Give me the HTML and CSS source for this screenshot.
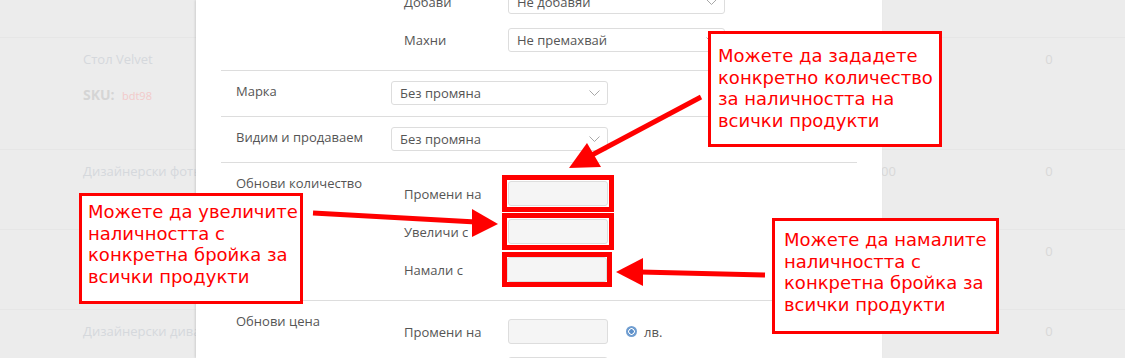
FILE: index.html
```html
<!DOCTYPE html>
<html lang="bg">
<head>
    <meta charset="UTF-8">
    <meta name="viewport" content="width=device-width, initial-scale=1.0">
    <title>Масова редакция на продукти</title>
    <link rel="stylesheet" href="styles.css">
</head>
<body>
    <div class="page">
        <!-- списък с продукти зад прозореца -->
        <div class="product-list">
            <div class="product-row row-top"></div>
            <div class="product-row row-tall">
                <div class="cell-name">
                    Стол Velvet
                    <div class="sku"><b>SKU:</b> <span>bdt98</span></div>
                </div>
                <div class="cell-price"></div>
                <div class="cell-qty">0</div>
            </div>
            <div class="product-row">
                <div class="cell-name">Дизайнерски фотьойл</div>
                <div class="cell-price">100</div>
                <div class="cell-qty">0</div>
            </div>
            <div class="product-row">
                <div class="cell-name"></div>
                <div class="cell-price"></div>
                <div class="cell-qty">0</div>
            </div>
            <div class="product-row">
                <div class="cell-name">Дизайнерски диван</div>
                <div class="cell-price"></div>
                <div class="cell-qty">0</div>
            </div>
        </div>

        <!-- прозорец за масова редакция -->
        <div class="modal">
            <div class="modal-body">
                <div class="field-row">
                    <div class="field-label"></div>
                    <div class="sub-rows">
                        <div class="sub-row">
                            <span class="sub-label">Добави</span>
                            <div class="select">
                                <span>Не добавяй</span>
                                <svg class="chevron" width="11" height="6" viewBox="0 0 11 6"><polyline points="0.5,0.5 5.5,5.5 10.5,0.5"/></svg>
                            </div>
                        </div>
                        <div class="sub-row">
                            <span class="sub-label">Махни</span>
                            <div class="select">
                                <span>Не премахвай</span>
                                <svg class="chevron" width="11" height="6" viewBox="0 0 11 6"><polyline points="0.5,0.5 5.5,5.5 10.5,0.5"/></svg>
                            </div>
                        </div>
                    </div>
                </div>

                <div class="field-row field-single">
                    <div class="field-label">Марка</div>
                    <div class="select">
                        <span>Без промяна</span>
                        <svg class="chevron" width="11" height="6" viewBox="0 0 11 6"><polyline points="0.5,0.5 5.5,5.5 10.5,0.5"/></svg>
                    </div>
                </div>

                <div class="field-row field-single">
                    <div class="field-label">Видим и продаваем</div>
                    <div class="select">
                        <span>Без промяна</span>
                        <svg class="chevron" width="11" height="6" viewBox="0 0 11 6"><polyline points="0.5,0.5 5.5,5.5 10.5,0.5"/></svg>
                    </div>
                </div>

                <div class="field-row">
                    <div class="field-label">Обнови количество</div>
                    <div class="sub-rows">
                        <div class="sub-row">
                            <span class="sub-label">Промени на</span>
                            <span class="marker"><input type="text" class="text-input"></span>
                        </div>
                        <div class="sub-row">
                            <span class="sub-label">Увеличи с</span>
                            <span class="marker"><input type="text" class="text-input"></span>
                        </div>
                        <div class="sub-row">
                            <span class="sub-label">Намали с</span>
                            <span class="marker marker-thin"><input type="text" class="text-input"></span>
                        </div>
                    </div>
                </div>

                <div class="field-row">
                    <div class="field-label">Обнови цена</div>
                    <div class="sub-rows">
                        <div class="sub-row">
                            <span class="sub-label">Промени на</span>
                            <input type="text" class="text-input">
                            <span class="radio"></span>
                            <span class="radio-label">лв.</span>
                        </div>
                        <div class="sub-row">
                            <span class="sub-label">Увеличи с</span>
                            <input type="text" class="text-input">
                        </div>
                    </div>
                </div>
            </div>
        </div>

        <!-- стрелки към полетата -->
        <svg class="arrows" width="1125" height="358" viewBox="0 0 1125 358">
            <line x1="701" y1="97" x2="592" y2="155"/>
            <polygon points="569,168 587,143 601,167"/>
            <line x1="313" y1="213" x2="476" y2="222"/>
            <polygon points="498,224 472,209 472,237"/>
            <line x1="765" y1="275" x2="640" y2="272"/>
            <polygon points="616,272 643,258 643,286"/>
        </svg>

        <div class="note note-set">Можете да зададете конкретно количество за наличността на всички продукти</div>
        <div class="note note-up">Можете да увеличите наличността с конкретна бройка за всички продукти</div>
        <div class="note note-down">Можете да намалите наличността с конкретна бройка за всички продукти</div>
    </div>
</body>
</html>
```

FILE: styles.css
```css
body {
    margin: 0;
    font-family: "Open Sans", Arial, sans-serif;
    font-size: 13px;
    color: #555;
}
.page {
    position: relative;
    width: 1125px;
    height: 358px;
    overflow: hidden;
    background-color: #ececec;
}

/* списък отзад */
.product-row {
    display: flex;
    height: 80px;
    padding: 12px 0 0 83px;
    box-sizing: border-box;
    border-bottom: 1px solid #e6e6e6;
    line-height: 18px;
    color: #d5d8dc;
}
.row-top {
    height: 38px;
}
.row-tall {
    height: 112px;
}
.cell-name {
    flex: 0 0 713px;
}
.cell-price {
    flex: 0 0 100px;
    text-align: right;
    color: #d8d8d8;
}
.cell-qty {
    flex: 0 0 98px;
    margin-left: 104px;
    text-align: center;
    color: #d8d8d8;
}
.sku {
    margin-top: 18px;
}
.sku b {
    font-size: 14px;
    color: #d5d5d5;
    margin-right: 4px;
}
.sku span {
    font-size: 11px;
    color: #f2caca;
}

/* прозорец */
.modal {
    position: absolute;
    left: 196px;
    top: 0;
    width: 686px;
    height: 358px;
    overflow: hidden;
    background-color: #fff;
    box-shadow: -1px 0 2px rgba(0, 0, 0, 0.12);
}
.modal-body {
    margin-top: -29px;
    padding: 0 25px;
}
.field-row {
    display: grid;
    grid-template-columns: 155px 1fr;
    padding: 10px 0 5px 15px;
    border-bottom: 1px solid #ddd;
}
.field-single {
    padding: 10px 0 11px 15px;
}
.field-label {
    line-height: 20px;
    color: #555;
}
.sub-rows {
    margin-top: 8px;
}
.sub-row {
    display: flex;
    align-items: center;
    height: 25px;
    margin-bottom: 13px;
}
.sub-label {
    width: 104px;
    padding-left: 13px;
    flex-shrink: 0;
}
.select {
    display: flex;
    align-items: center;
    justify-content: space-between;
    width: 217px;
    height: 24px;
    padding: 0 7px 0 8px;
    box-sizing: border-box;
    border: 1px solid #ddd;
    border-radius: 3px;
    background-color: #fff;
    color: #555;
}
.chevron {
    fill: none;
    stroke: #a8a8a8;
    stroke-width: 1;
}
.text-input {
    display: block;
    width: 100px;
    height: 25px;
    margin: 0;
    padding: 0;
    box-sizing: border-box;
    border: 1px solid #ddd;
    border-radius: 3px;
    background-color: #f5f5f5;
}
.marker {
    display: block;
    margin: -6px;
    padding: 1px;
    border: 5px solid #f00;
}
.marker-thin {
    margin: -5px -4px -5px -6px;
    padding: 0;
}
.radio {
    width: 11px;
    height: 11px;
    margin-left: 18px;
    border-radius: 50%;
    background: radial-gradient(circle, #5d8fc8 0 2px, #fff 2.5px 3px, #6f9dd0 3.5px);
}
.radio-label {
    margin-left: 7px;
}

/* пояснения */
.arrows {
    position: absolute;
    left: 0;
    top: 0;
}
.arrows line {
    stroke: #f00;
    stroke-width: 5;
}
.arrows polygon {
    fill: #f00;
}
.note {
    position: absolute;
    box-sizing: border-box;
    border: 3px solid #f00;
    background-color: #fff;
    color: #f00;
    font-family: "DejaVu Sans", sans-serif;
    font-size: 18px;
    line-height: 21.7px;
}
.note-set {
    left: 708px;
    top: 31px;
    width: 234px;
    height: 116px;
    padding: 11px 0 0 7px;
}
.note-up {
    left: 79px;
    top: 193px;
    width: 224px;
    height: 111px;
    padding: 5px 0 0 6px;
}
.note-down {
    left: 772px;
    top: 218px;
    width: 227px;
    height: 116px;
    padding: 8px 0 0 9px;
}
```
